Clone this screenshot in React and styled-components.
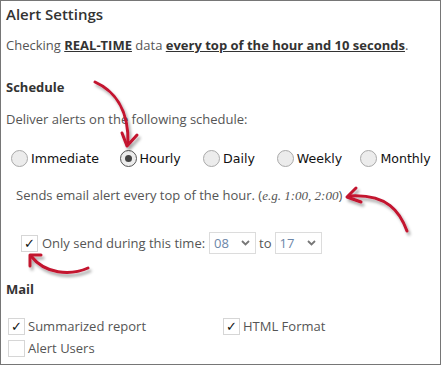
import React from "react";
import styled, { createGlobalStyle } from "styled-components";

const Global = createGlobalStyle`
  html, body { margin: 0; padding: 0; background: #fff; }
  body { font-family: "Open Sans", "Liberation Sans", sans-serif; }
`;

const Panel = styled.div`
  position: relative;
  box-sizing: border-box;
  width: 441px;
  height: 365px;
  border: 1px solid #767676;
  padding: 3px 0 0 5px;
  color: #555;
  font-size: 13px;
  display: flex;
  flex-direction: column;
`;

const Title = styled.div`
  font-size: 15px;
  font-weight: 600;
  color: #333;
  line-height: 20px;
`;

const Line = styled.div`
  line-height: 20px;
  margin-top: ${(p) => p.$mt || 0}px;
  padding-left: ${(p) => p.$pl || 0}px;
  white-space: nowrap;
`;

const Strong = styled.span`
  font-weight: 700;
  color: #333;
  text-decoration: underline;
`;

const Heading = styled.div`
  font-weight: 700;
  color: #333;
  line-height: 20px;
  margin-top: ${(p) => p.$mt || 0}px;
`;

const RadioRow = styled.div`
  display: flex;
  align-items: center;
  margin-top: 19px;
  padding-left: 5px;
  height: 20px;
`;

const RadioItem = styled.label`
  display: flex;
  align-items: center;
  width: ${(p) => p.$w}px;
  color: #111;
  font-family: "DejaVu Sans", Verdana, sans-serif;
  font-size: 12.6px;
`;

const Circle = styled.span`
  box-sizing: border-box;
  width: 17px;
  height: 17px;
  border-radius: 50%;
  border: 1px solid ${(p) => (p.$on ? "#555" : "#a9a9a9")};
  background: #ececec;
  margin-right: 3px;
  display: flex;
  align-items: center;
  justify-content: center;
  &::after {
    content: "";
    display: ${(p) => (p.$on ? "block" : "none")};
    width: 7px;
    height: 7px;
    border-radius: 50%;
    background: #444;
  }
`;

const Eg = styled.i`
  font-family: "Liberation Serif", "Times New Roman", serif;
  font-size: 13px;
  font-weight: 400;
  color: #555;
`;

const TimeRow = styled.div`
  display: flex;
  align-items: center;
  height: 22px;
  margin-top: 26px;
  padding-left: 15px;
  gap: 4px;
`;

const Box = styled.span`
  box-sizing: border-box;
  width: 17px;
  height: 17px;
  border: 1px solid #d6d6d6;
  background: #fff;
  display: inline-flex;
  align-items: center;
  justify-content: center;
  color: #111;
  font-size: 13px;
  line-height: 1;
  flex: none;
`;

const Select = styled.span`
  box-sizing: border-box;
  width: 47px;
  height: 22px;
  border: 1px solid #dcdcdc;
  display: inline-flex;
  align-items: center;
  justify-content: space-between;
  padding: 0 5px 0 4px;
  color: #6c86a8;
  font-size: 13px;
`;

const ToText = styled.span`
  margin: 0 -1px;
`;

const MailGrid = styled.div`
  display: grid;
  grid-template-columns: 215px auto;
  row-gap: 4px;
  margin-top: 18px;
  padding-left: 2px;
`;

const Check = styled.label`
  display: flex;
  align-items: center;
  gap: 3px;
  height: 18px;
  color: #555;
`;

const Overlay = styled.svg`
  position: absolute;
  left: -1px;
  top: -1px;
  pointer-events: none;
`;

const Chevron = () => (
  <svg width="9" height="6" viewBox="0 0 9 6">
    <path d="M1 1l3.5 3.5L8 1" fill="none" stroke="#777" strokeWidth="1.8" />
  </svg>
);

const Arrows = () => (
  <Overlay width="442" height="366" viewBox="0 0 442 366">
    <defs>
      <filter id="sh" x="-30%" y="-30%" width="160%" height="160%">
        <feDropShadow dx="2" dy="3" stdDeviation="1.6" floodColor="#000" floodOpacity="0.35" />
      </filter>
    </defs>
    <g fill="none" stroke="#c3122f" strokeWidth="3" strokeLinecap="round" strokeLinejoin="round" filter="url(#sh)">
      <path d="M95 82 C113 90 129 108 128 144" />
      <path d="M122 133 L127 146 L137 135" />
      <path d="M407 231 C400 212 388 194 350 196" />
      <path d="M356 188 L347 197 L361 202" />
      <path d="M88 268 C70 276 45 274 31 256" />
      <path d="M30 266 L30 255 L41 255" />
    </g>
  </Overlay>
);

export default function App() {
  return (
    <>
      <Global />
      <Panel>
        <Title>Alert Settings</Title>
        <Line $mt={11}>
          Checking <Strong>REAL-TIME</Strong> data{" "}
          <Strong>every top of the hour and 10 seconds</Strong>.
        </Line>
        <Heading $mt={22}>Schedule</Heading>
        <Line $mt={12}>Deliver alerts on the following schedule:</Line>
        <RadioRow>
          <RadioItem $w={109}>
            <Circle />
            Immediate
          </RadioItem>
          <RadioItem $w={84}>
            <Circle $on />
            Hourly
          </RadioItem>
          <RadioItem $w={74}>
            <Circle />
            Daily
          </RadioItem>
          <RadioItem $w={84}>
            <Circle />
            Weekly
          </RadioItem>
          <RadioItem $w={80}>
            <Circle />
            Monthly
          </RadioItem>
        </RadioRow>
        <Line $mt={17} $pl={10}>
          Sends email alert every top of the hour. (<Eg>e.g. 1:00, 2:00</Eg>)
        </Line>
        <TimeRow>
          <Box>✓</Box>
          <span>Only send during this time:</span>
          <Select>
            08
            <Chevron />
          </Select>
          <ToText>to</ToText>
          <Select>
            17
            <Chevron />
          </Select>
        </TimeRow>
        <Heading $mt={25}>Mail</Heading>
        <MailGrid>
          <Check>
            <Box>✓</Box>
            Summarized report
          </Check>
          <Check>
            <Box>✓</Box>
            HTML Format
          </Check>
          <Check>
            <Box />
            Alert Users
          </Check>
        </MailGrid>
        <Arrows />
      </Panel>
    </>
  );
}
